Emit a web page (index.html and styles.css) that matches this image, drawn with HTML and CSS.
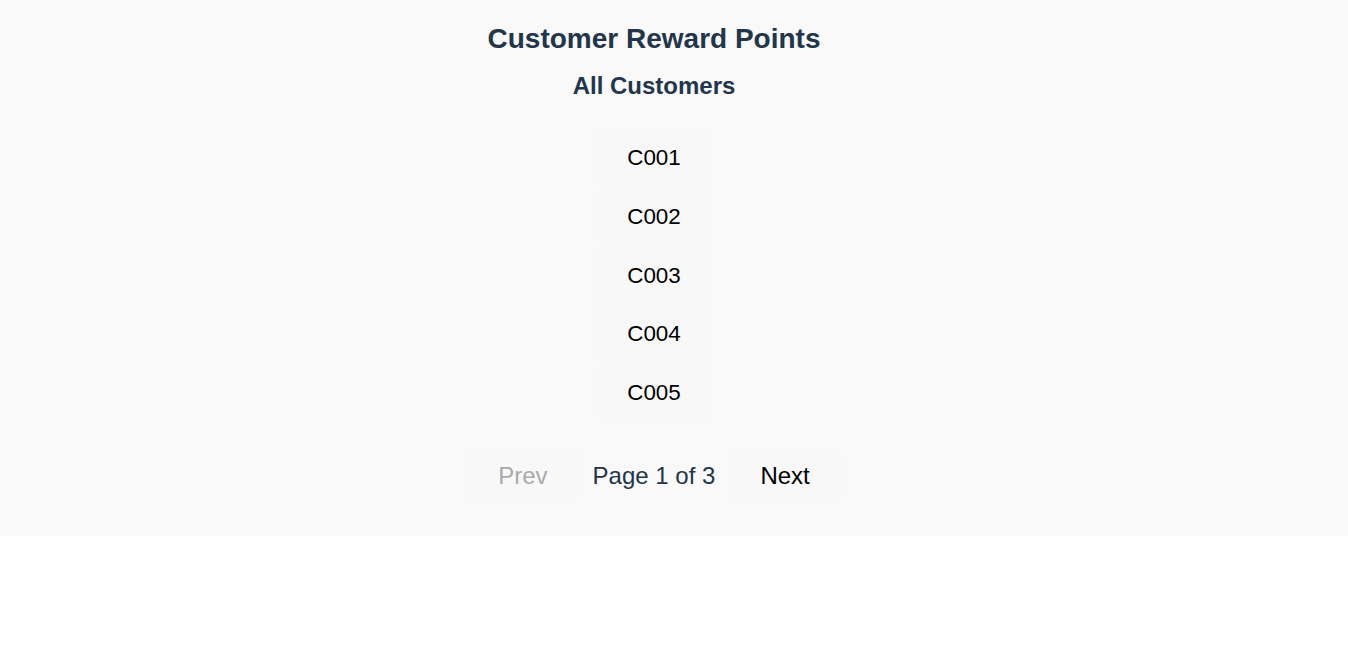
FILE: index.html
```html
<!DOCTYPE html>
<html lang="en">
<head>
<meta charset="utf-8">
<title>Customer Reward Points</title>
<link rel="stylesheet" href="styles.css">
</head>
<body>
<div class="app">
  <h1 class="title">Customer Reward Points</h1>
  <h2 class="subtitle">All Customers</h2>
  <ul class="customer-list">
    <li><button class="customer-btn">C001</button></li>
    <li><button class="customer-btn">C002</button></li>
    <li><button class="customer-btn">C003</button></li>
    <li><button class="customer-btn">C004</button></li>
    <li><button class="customer-btn">C005</button></li>
  </ul>
  <div class="pagination">
    <button class="page-btn disabled" disabled>Prev</button>
    <span class="page-info">Page 1 of 3</span>
    <button class="page-btn">Next</button>
  </div>
</div>
</body>
</html>
```
FILE: styles.css
```css
html, body {
  margin: 0;
  padding: 0;
  background: #ffffff;
  font-family: "Liberation Sans", Arial, sans-serif;
}

.app {
  background: #f9f9f9;
  padding: 23px 40px 33px 0;
  display: flex;
  flex-direction: column;
  align-items: center;
}

.title {
  margin: 0;
  font-size: 28px;
  font-weight: bold;
  line-height: 32px;
  color: #22354a;
}

.subtitle {
  margin: 17px 0 0;
  font-size: 24px;
  font-weight: bold;
  line-height: 28px;
  color: #22354a;
}

.customer-list {
  list-style: none;
  margin: 30px 0 0;
  padding: 0;
  display: flex;
  flex-direction: column;
  align-items: center;
  gap: 3.75px;
}

.customer-btn {
  font-family: "Liberation Sans", Arial, sans-serif;
  font-size: 22.4px;
  line-height: 25px;
  color: #000;
  background: #f8f8f8;
  border: none;
  border-radius: 12px;
  padding: 15px 31px;
  width: 116px;
  box-shadow: 0 0 3px rgba(0, 0, 0, 0.015);
  cursor: pointer;
}

.pagination {
  margin-top: 28px;
  display: flex;
  align-items: center;
  gap: 14px;
}

.page-btn {
  font-family: "Liberation Sans", Arial, sans-serif;
  font-size: 24px;
  line-height: 25px;
  color: #000;
  background: #f8f8f8;
  border: none;
  border-radius: 12px;
  padding: 15px 31px;
  box-shadow: 0 0 3px rgba(0, 0, 0, 0.015);
  cursor: pointer;
}

.page-btn.disabled {
  color: #aaaaaa;
  cursor: default;
}

.page-info {
  font-size: 24px;
  color: #22354a;
}
```
